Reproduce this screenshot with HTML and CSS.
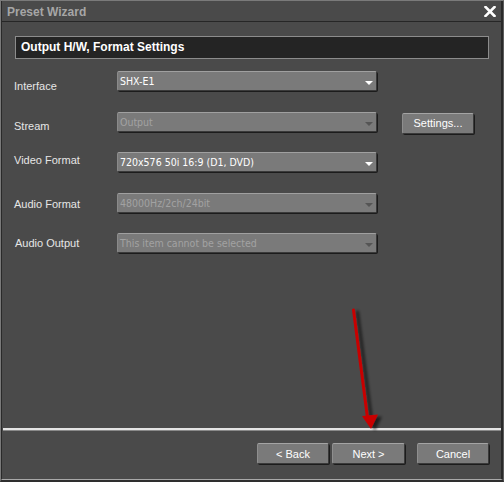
FILE: index.html
```html
<!DOCTYPE html>
<html>
<head>
<meta charset="utf-8">
<link rel="stylesheet" href="styles.css">
</head>
<body>
<div class="window">
  <div class="inner">
    <div class="titlebar">
      <span class="title">Preset Wizard</span>
      <svg class="close" width="12" height="11" viewBox="0 0 12 11"><path d="M1.5 1 L10.5 10 M10.5 1 L1.5 10" stroke="#fff" stroke-width="2.6" stroke-linecap="square"/></svg>
    </div>
    <div class="content">
      <div class="header">Output H/W, Format Settings</div>
      <div class="form">
        <div class="label l1">Interface</div>
        <div class="combo"><span>SHX-E1</span><i class="arrow"></i></div>
        <div></div><div></div>

        <div class="label l2">Stream</div>
        <div class="combo disabled"><span>Output</span><i class="arrow"></i></div>
        <div></div>
        <button class="btn settings">Settings...</button>

        <div class="label l3">Video Format</div>
        <div class="combo"><span>720x576 50i 16:9 (D1, DVD)</span><i class="arrow"></i></div>
        <div></div><div></div>

        <div class="label l4">Audio Format</div>
        <div class="combo disabled"><span>48000Hz/2ch/24bit</span><i class="arrow"></i></div>
        <div></div><div></div>

        <div class="label l5">Audio Output</div>
        <div class="combo disabled"><span>This item cannot be selected</span><i class="arrow"></i></div>
        <div></div><div></div>
      </div>
    </div>
    <div class="separator"></div>
    <div class="footer">
      <button class="btn">&lt; Back</button>
      <button class="btn next">Next &gt;</button>
      <button class="btn cancel">Cancel</button>
    </div>
  </div>
  <svg class="pointer" width="504" height="482" viewBox="0 0 504 482">
    <defs>
      <filter id="sh" x="-50%" y="-50%" width="200%" height="200%">
        <feGaussianBlur in="SourceAlpha" stdDeviation="1.6"/>
        <feOffset dx="4" dy="2" result="b"/>
        <feComponentTransfer><feFuncA type="linear" slope="0.6"/></feComponentTransfer>
        <feMerge><feMergeNode/><feMergeNode in="SourceGraphic"/></feMerge>
      </filter>
    </defs>
    <g filter="url(#sh)">
      <path d="M353.5 310 L367.5 418" stroke="#c80000" stroke-width="3" stroke-linecap="round"/>
      <path d="M362 416 L378 414.5 L371 429 Z" fill="#c80000"/>
    </g>
  </svg>
</div>
</body>
</html>
```
FILE: styles.css
```css
html, body {
  margin: 0;
  padding: 0;
  background: #4a4a4a;
}
.window {
  position: relative;
  width: 504px;
  height: 482px;
  box-sizing: border-box;
  background: #4a4a4a;
  border-top: 1px solid #7a7a7a;
  border-left: 1px solid #7a7a7a;
  border-right: 1px solid #5c5c5c;
  border-bottom: 2px solid #2e2e2e;
  font-family: "Liberation Sans", Arial, sans-serif;
  font-size: 11px;
}
.inner {
  height: 100%;
  box-sizing: border-box;
  display: flex;
  flex-direction: column;
  border-left: 1px solid #2a2a2a;
  border-right: 2px solid #2a2a2a;
  border-bottom: 1px solid #a8a8a8;
}
.titlebar {
  height: 20px;
  border-bottom: 1px solid #262626;
  display: flex;
  align-items: center;
  justify-content: space-between;
  padding: 0 5px 0 5px;
  flex: none;
}
.title {
  color: #a6a6a6;
  font-weight: bold;
  font-size: 12px;
  margin-top: 1px;
}
.close {
  display: block;
  margin-top: 1px;
}
.content {
  flex: 1;
  padding-top: 14px;
}
.header {
  margin: 0 12px 0 13px;
  height: 23px;
  box-sizing: border-box;
  background: #242424;
  border: 1px solid #8c8c8c;
  color: #ffffff;
  font-weight: bold;
  font-size: 12px;
  line-height: 21px;
  padding-left: 5px;
}
.form {
  margin-top: 12px;
  padding-left: 12px;
  display: grid;
  grid-template-columns: 103px 260px 25px 72px;
  grid-auto-rows: 20px;
  row-gap: 20.5px;
}
.label {
  color: #e6e6e6;
  line-height: 13px;
}
.l1 { padding-top: 9px; }
.l2 { padding-top: 8px; }
.l3 { padding-top: 2px; }
.l4 { padding-top: 5px; }
.l5 { padding-top: 4px; padding-left: 1px; }
.combo {
  position: relative;
  box-sizing: border-box;
  height: 20px;
  background: #7a7a7a;
  border-top: 1px solid #a0a0a0;
  border-left: 1px solid #8a8a8a;
  border-right: 1px solid #3a3a3a;
  border-bottom: 1px solid #3a3a3a;
  box-shadow: 1px 1px 0 #1c1c1c;
  border-radius: 2px;
  color: #ffffff;
  font-family: "DejaVu Sans Condensed", "DejaVu Sans", sans-serif;
  font-stretch: condensed;
  font-size: 10.5px;
  line-height: 18px;
  padding-left: 2px;
}
.combo.disabled {
  color: #a2a2a2;
}
.arrow {
  position: absolute;
  right: 3px;
  top: 9px;
  width: 0;
  height: 0;
  border-left: 4.5px solid transparent;
  border-right: 4.5px solid transparent;
  border-top: 4px solid #ffffff;
}
.combo.disabled .arrow {
  border-top-color: #555555;
}
.btn {
  box-sizing: border-box;
  height: 21px;
  width: 72px;
  margin: 0;
  padding: 0;
  background: #7a7a7a;
  border-top: 1px solid #a4a4a4;
  border-left: 1px solid #8e8e8e;
  border-right: 1px solid #3a3a3a;
  border-bottom: 1px solid #3a3a3a;
  box-shadow: 1px 1px 0 #1c1c1c;
  border-radius: 2px;
  color: #ffffff;
  font-family: "Liberation Sans", Arial, sans-serif;
  font-size: 11px;
  line-height: 18px;
}
.settings {
  margin-top: 1px;
}
.separator {
  flex: none;
  height: 2px;
  margin-left: 1px;
  background: #e4e4e4;
  border-bottom: 1px solid #8a8a8a;
}
.footer {
  flex: none;
  height: 48px;
  box-sizing: border-box;
  padding: 12px 12px 0 0;
  display: flex;
  justify-content: flex-end;
  align-items: flex-start;
}
.next {
  margin-left: 3px;
  margin-right: 12px;
  width: 73px;
}
.pointer {
  position: absolute;
  left: -1px;
  top: -1px;
  pointer-events: none;
}
```
